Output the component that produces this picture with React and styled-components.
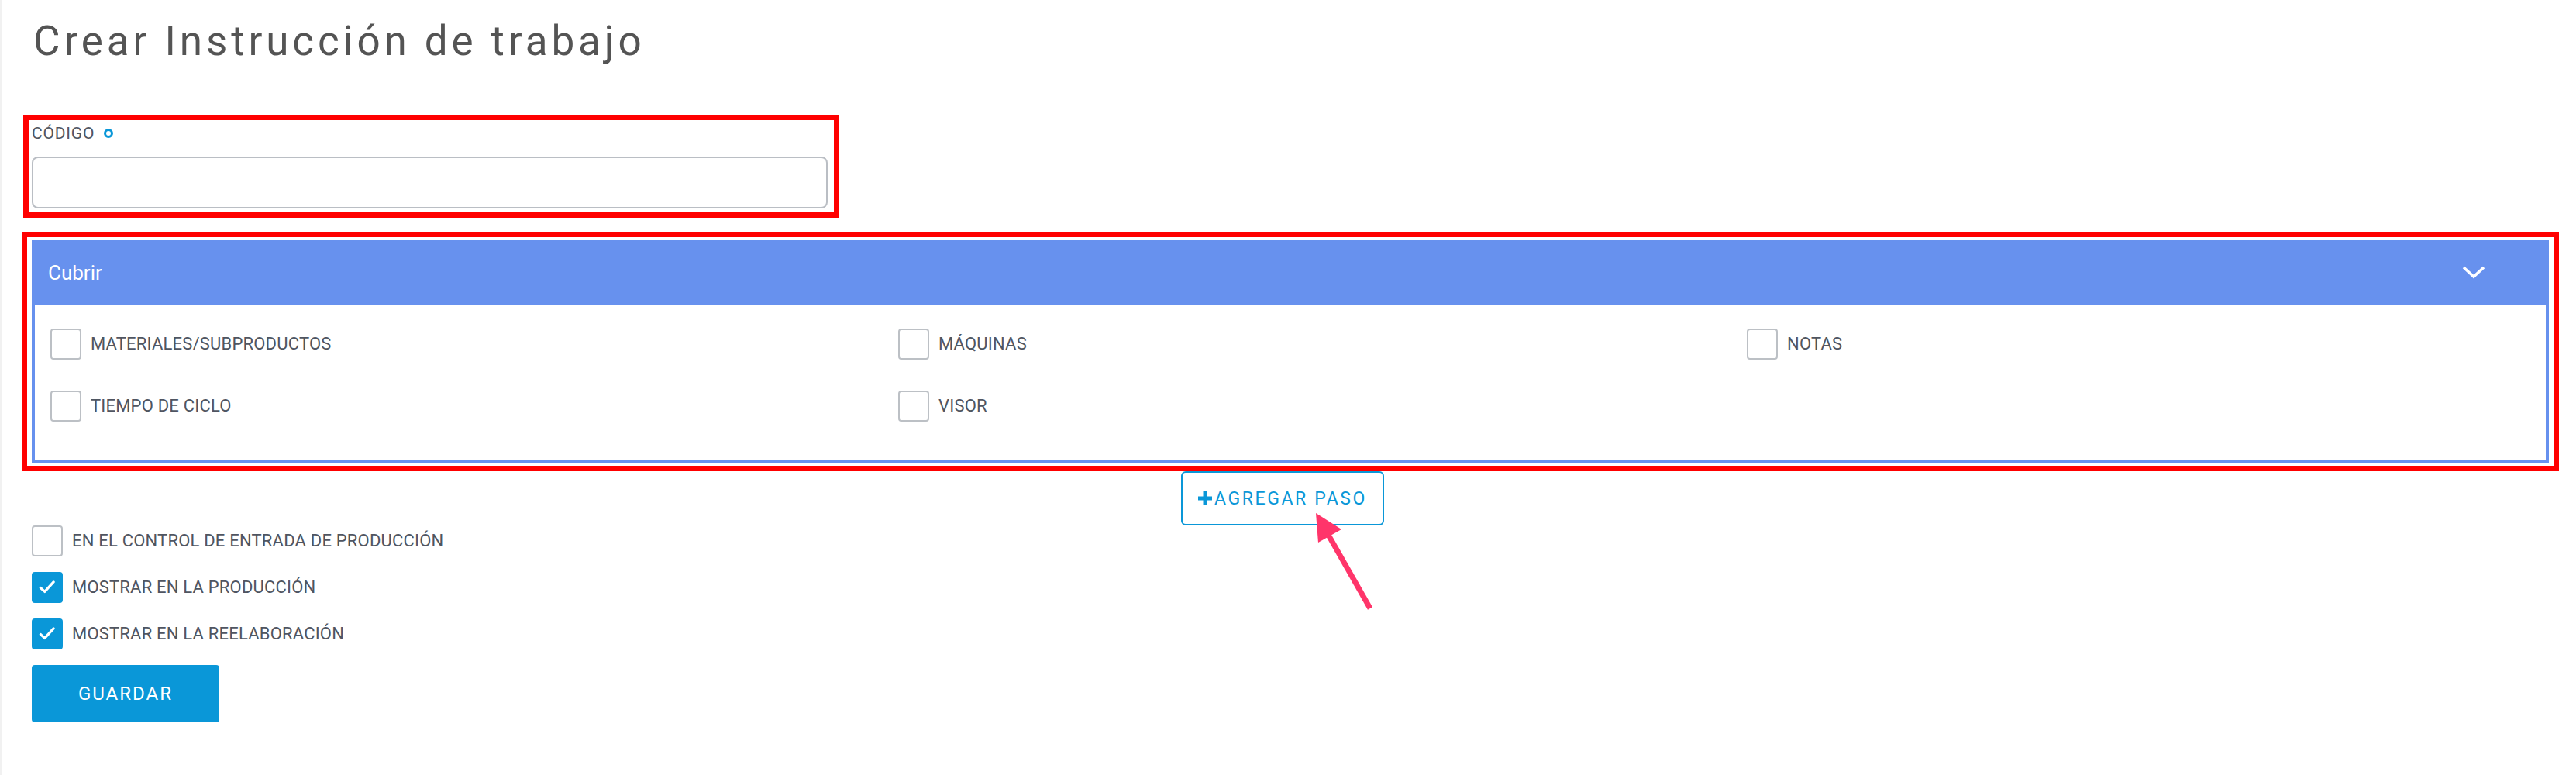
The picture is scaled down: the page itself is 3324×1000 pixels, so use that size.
import React from "react";
import styled, { createGlobalStyle } from "styled-components";

const colors = {
  text: "#4f5561",
  title: "#545454",
  primary: "#0a97d8",
  accordion: "#6791ee",
  border: "#bcc0c5",
  annotation: "#ff0000",
  arrow: "#ff356a",
};

const GlobalStyle = createGlobalStyle`
  html, body {
    margin: 0;
    padding: 0;
    background: #fff;
  }
  body {
    font-family: Roboto, "Noto Sans", sans-serif;
  }
`;

const Page = styled.div`
  position: relative;
  min-height: 1000px;
  padding-top: 21px;
  box-sizing: border-box;
  box-shadow: inset 3px 0 0 #f1f1f1;
`;

const Title = styled.h1`
  margin: 0 0 0 43px;
  font-size: 53px;
  line-height: 64px;
  font-weight: 400;
  letter-spacing: 4.9px;
  color: ${colors.title};
`;

// red annotation frames drawn round parts of the form
const Highlight = styled.div`
  box-sizing: border-box;
  border: 7px solid ${colors.annotation};
  margin: ${(p) => p.$top}px 0 0 ${(p) => p.$left}px;
  width: ${(p) => p.$width}px;
  padding: ${(p) => p.$padding};
`;

const FieldLabel = styled.label`
  display: flex;
  align-items: center;
  font-size: 21px;
  line-height: 24px;
  letter-spacing: 0.8px;
  color: ${colors.text};
`;

const Required = styled.span`
  width: 12px;
  height: 12px;
  box-sizing: border-box;
  margin-left: 12px;
  border: 3px solid ${colors.primary};
  border-radius: 50%;
`;

const TextInput = styled.input`
  display: block;
  box-sizing: border-box;
  width: 1027px;
  height: 67px;
  margin-top: 18px;
  border: 2px solid #babec4;
  border-radius: 8px;
  outline: none;
`;

const Accordion = styled.section``;

const AccordionHeader = styled.div`
  height: 84px;
  display: flex;
  align-items: center;
  justify-content: space-between;
  padding: 0 82px 0 21px;
  background: ${colors.accordion};
  color: #fff;
  font-size: 26px;
`;

const AccordionBody = styled.div`
  display: grid;
  grid-template-columns: 1094px 1095px 1fr;
  row-gap: 40px;
  padding: 30px 0 50px 20px;
  border: 4px solid ${colors.accordion};
  border-top: 0;
`;

const CheckRow = styled.label`
  display: flex;
  align-items: center;
  gap: 12px;
  font-size: 22px;
  line-height: 26px;
  letter-spacing: 0.2px;
  color: ${colors.text};
`;

const Box = styled.span`
  flex: none;
  width: 40px;
  height: 40px;
  box-sizing: border-box;
  display: flex;
  align-items: center;
  justify-content: center;
  border-radius: 4px;
  border: 2px solid ${(p) => (p.$checked ? colors.primary : colors.border)};
  background: ${(p) => (p.$checked ? colors.primary : "#fff")};
`;

const AddButton = styled.button`
  display: flex;
  align-items: center;
  justify-content: center;
  gap: 3px;
  box-sizing: border-box;
  width: 262px;
  height: 70px;
  margin-left: 1524px;
  padding: 0;
  border: 2px solid ${colors.primary};
  border-radius: 6px;
  background: #fff;
  color: ${colors.primary};
  font-family: inherit;
  font-size: 23px;
  letter-spacing: 2.6px;
`;

const Options = styled.div`
  display: flex;
  flex-direction: column;
  gap: 20px;
  margin-left: 41px;
`;

const SaveButton = styled.button`
  display: block;
  width: 242px;
  height: 74px;
  margin: 20px 0 0 41px;
  border: 0;
  border-radius: 4px;
  background: ${colors.primary};
  color: #fff;
  font-family: inherit;
  font-size: 24px;
  letter-spacing: 2px;
`;

const Arrow = styled.svg`
  position: absolute;
  left: 1690px;
  top: 650px;
`;

const Check = ({ label, checked }) => (
  <CheckRow>
    <Box $checked={checked}>
      {checked && (
        <svg width="26" height="26" viewBox="0 0 24 24">
          <path
            d="M4 12.5 L9 17 L19.5 5.5"
            fill="none"
            stroke="#fff"
            strokeWidth="3"
            strokeLinecap="round"
            strokeLinejoin="round"
          />
        </svg>
      )}
    </Box>
    {label}
  </CheckRow>
);

const App = () => (
  <Page>
    <GlobalStyle />
    <Title>Crear Instrucción de trabajo</Title>

    <Highlight $top={63} $left={30} $width={1053} $padding="5px 8px 5px 4px">
      <FieldLabel>
        CÓDIGO
        <Required />
      </FieldLabel>
      <TextInput />
    </Highlight>

    <Highlight $top={18} $left={28} $width={3274} $padding="4px 6px 3px 6px">
      <Accordion>
        <AccordionHeader>
          Cubrir
          <svg width="30" height="18" viewBox="0 0 30 18">
            <path d="M2 2 L15 14 L28 2" fill="none" stroke="#fff" strokeWidth="3.6" />
          </svg>
        </AccordionHeader>
        <AccordionBody>
          <Check label="MATERIALES/SUBPRODUCTOS" />
          <Check label="MÁQUINAS" />
          <Check label="NOTAS" />
          <Check label="TIEMPO DE CICLO" />
          <Check label="VISOR" />
        </AccordionBody>
      </Accordion>
    </Highlight>

    <AddButton>
      <svg width="18" height="18" viewBox="0 0 18 18">
        <rect x="6.5" y="0" width="5" height="18" fill={colors.primary} />
        <rect x="0" y="6.5" width="18" height="5" fill={colors.primary} />
      </svg>
      AGREGAR PASO
    </AddButton>

    <Options>
      <Check label="EN EL CONTROL DE ENTRADA DE PRODUCCIÓN" />
      <Check label="MOSTRAR EN LA PRODUCCIÓN" checked />
      <Check label="MOSTRAR EN LA REELABORACIÓN" checked />
    </Options>

    <SaveButton>GUARDAR</SaveButton>

    <Arrow width="90" height="145" viewBox="0 0 90 145">
      <line x1="78" y1="135" x2="20" y2="33" stroke={colors.arrow} strokeWidth="7" />
      <polygon points="8,12 41,33 11,50" fill={colors.arrow} />
    </Arrow>
  </Page>
);

export default App;
